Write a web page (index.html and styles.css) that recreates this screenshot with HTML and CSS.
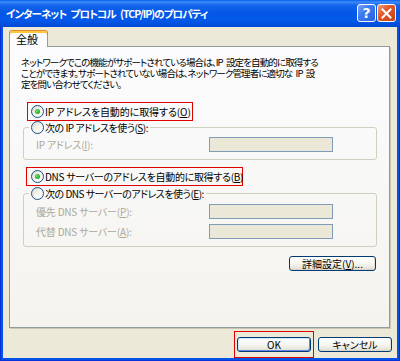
FILE: index.html
```html
<!DOCTYPE html>
<html lang="ja">
<head>
<meta charset="utf-8">
<link rel="stylesheet" href="styles.css">
</head>
<body>
<div class="window">
  <div class="titlebar">
    <span class="title">インターネット プロトコル (TCP/IP)のプロパティ</span>
    <div class="tb-buttons">
      <span class="tb-btn help">?</span>
      <span class="tb-btn close"><svg width="11" height="11" viewBox="0 0 11 11"><path d="M1.5 1.5 L9.5 9.5 M9.5 1.5 L1.5 9.5" stroke="#fff" stroke-width="2" stroke-linecap="square"/></svg></span>
    </div>
  </div>
  <div class="client">
    <div class="tabs"><div class="tab">全般</div></div>
    <div class="panel">
      <p class="desc">ネットワークでこの機能がサポートされている場合は、IP 設定を自動的に取得する<br>ことができます。サポートされていない場合は、ネットワーク管理者に適切な IP 設<br>定を問い合わせてください。</p>

      <div class="hl hl1">
        <span class="radio-row"><span class="radio checked"></span><span class="rtext">IP アドレスを自動的に取得する(<u>O</u>)</span></span>
      </div>

      <fieldset class="group g1">
        <legend><span class="radio-row"><span class="radio"></span><span class="rtext">次の IP アドレスを使う(<u>S</u>):</span></span></legend>
        <div class="field"><span class="lbl">IP アドレス(<u>I</u>):</span><span class="input"></span></div>
      </fieldset>

      <div class="hl hl2">
        <span class="radio-row"><span class="radio checked"></span><span class="rtext">DNS サーバーのアドレスを自動的に取得する(<u>B</u>)</span></span>
      </div>

      <fieldset class="group g2">
        <legend><span class="radio-row"><span class="radio"></span><span class="rtext">次の DNS サーバーのアドレスを使う(<u>E</u>):</span></span></legend>
        <div class="field"><span class="lbl">優先 DNS サーバー(<u>P</u>):</span><span class="input"></span></div>
        <div class="field"><span class="lbl">代替 DNS サーバー(<u>A</u>):</span><span class="input"></span></div>
      </fieldset>

      <div class="adv-row"><button class="btn adv">詳細設定(<u>V</u>)...</button></div>
    </div>
    <div class="buttons">
      <div class="ok-wrap"><button class="btn default">OK</button></div>
      <button class="btn">キャンセル</button>
    </div>
  </div>
</div>
</body>
</html>
```
FILE: styles.css
```css
* { box-sizing: border-box; }
html, body { margin: 0; padding: 0; }
body {
  width: 400px;
  height: 361px;
  overflow: hidden;
  font-family: "Noto Sans CJK JP", sans-serif;
  font-size: 10px;
  color: #000;
  background: #fff;
}
.window {
  width: 400px;
  height: 361px;
  display: flex;
  flex-direction: column;
  background: #0553E6;
  box-shadow: inset 1px 0 #0831D9, inset -1px 0 #0831D9, inset 0 -1px #0831D9;
}
.titlebar {
  height: 27px;
  flex: none;
  display: flex;
  align-items: center;
  justify-content: space-between;
  padding: 0 4px 0 6px;
  background: linear-gradient(to bottom, #0A60EE 0, #3D8BF8 2px, #1666EC 5px, #0558E6 12px, #0458E8 21px, #0148D2 27px);
}
.title {
  color: #fff;
  font-weight: bold;
  font-size: 10.5px;
  letter-spacing: -0.95px;
  word-spacing: 3px;
  white-space: nowrap;
  font-feature-settings: "palt";
}
.tb-buttons { display: flex; gap: 1px; align-self: flex-start; margin-top: 4px; }
.tb-btn {
  width: 19px;
  height: 18px;
  border: 1px solid #fff;
  border-radius: 3px;
  display: flex;
  align-items: center;
  justify-content: center;
  color: #fff;
}
.help {
  background: linear-gradient(135deg, #7DA6F5 0%, #3C7BF0 40%, #2561E0 100%);
  font-family: "DejaVu Sans", sans-serif;
  font-weight: bold;
  font-size: 14px;
  line-height: 1;
}
.close {
  background: linear-gradient(135deg, #F09A7C 0%, #E2582C 40%, #C8400F 100%);
}
.client {
  flex: 1;
  margin: 0 3px 3px 3px;
  background: #ECE9D8;
  padding: 3px 0 0 6px;
  display: flex;
  flex-direction: column;
}
.tabs { display: flex; height: 16px; }
.tab {
  position: relative;
  z-index: 1;
  width: 39px;
  height: 17px;
  background: #FCFCFE;
  border: 1px solid #919B9C;
  border-top: 1px solid #E68B2C;
  border-bottom: none;
  border-radius: 3px 3px 0 0;
  box-shadow: inset 0 2px #FFC73C;
  padding: 3px 0 0 6px;
  font-size: 11px;
  line-height: 11px;
}
.panel {
  width: 381px;
  height: 282px;
  border: 1px solid #919B9C;
  background: linear-gradient(to bottom, #FCFCFE 0%, #F4F3EE 100%);
  box-shadow: 1px 1px 0 #C8C5B6;
  display: flex;
  flex-direction: column;
  align-items: flex-start;
}
.desc {
  margin: 10px 0 0 11px;
  font-size: 9.5px;
  line-height: 11px;
  white-space: nowrap;
  letter-spacing: -0.88px;
  word-spacing: 2px;
  font-feature-settings: "palt";
}
.hl {
  border: 1px solid #E00000;
  height: 19px;
  display: flex;
  align-items: center;
  padding-left: 3px;
}
.hl1 { margin: 12px 0 0 17px; width: 166px; }
.hl2 { margin: 7px 0 0 16px; width: 217px; padding-left: 4px; }
.radio-row { display: flex; align-items: center; gap: 1px; white-space: nowrap; line-height: 13px; }
.rtext { font-feature-settings: "palt"; }
.hl1 .rtext { letter-spacing: -0.1px; }
.hl2 .rtext { letter-spacing: -0.3px; }
legend .rtext { letter-spacing: -0.5px; }
.radio {
  width: 13px;
  height: 13px;
  border-radius: 50%;
  border: 1px solid #1C5180;
  background: linear-gradient(135deg, #DCD9CC 0%, #F4F3EE 50%, #FFFFFF 100%);
  position: relative;
  flex: none;
}
.radio.checked::after {
  content: "";
  position: absolute;
  left: 3px;
  top: 3px;
  width: 5px;
  height: 5px;
  border-radius: 50%;
  background: radial-gradient(circle at 40% 40%, #7BE47A 0, #2DB82C 50%, #1E9A1D 100%);
}
.group {
  margin: 0 0 0 13px;
  width: 354px;
  border: 1px solid #D0D0BF;
  border-radius: 3px;
  padding: 3px 0 7px 0;
  min-width: 0;
}
.g2 { margin-top: 1px; padding-top: 4px; }
.group legend {
  margin-left: 5px;
  padding: 0 2px;
}
.field {
  display: flex;
  align-items: center;
  height: 15px;
  margin-left: 12px;
}
.field + .field { margin-top: 5px; }
.lbl {
  width: 173px;
  color: #ACA899;
  white-space: nowrap;
  letter-spacing: -0.2px;
  font-feature-settings: "palt";
}
.input {
  width: 124px;
  height: 15px;
  border: 1px solid #7F9DB9;
  background: #EBE8D7;
}
.adv-row { align-self: flex-end; margin: 9px 13px 0 0; }
.btn {
  font-family: "Noto Sans CJK JP", sans-serif;
  font-size: 10px;
  color: #000;
  width: 74px;
  height: 15px;
  padding: 0;
  line-height: 13px;
  border: 1px solid #003C74;
  border-radius: 3px;
  background: linear-gradient(to bottom, #FFFFFF 0%, #F6F6F2 50%, #E8E6DC 85%, #D6D0C5 100%);
  box-shadow: inset -1px 0 #E3E1D6;
  font-feature-settings: "palt";
  display: block;
}
.adv { width: 87px; }
.default { box-shadow: inset 1px 1px #CEE7FF, inset -1px -1px #6982EE; }
.buttons {
  display: flex;
  justify-content: flex-end;
  gap: 7px;
  margin-top: 9px;
  padding-right: 5px;
}
.ok-wrap { position: relative; }
.ok-wrap::after {
  content: "";
  position: absolute;
  left: -3px;
  right: -3px;
  top: -6px;
  bottom: -6px;
  border: 1px solid #E00000;
  pointer-events: none;
}
```
